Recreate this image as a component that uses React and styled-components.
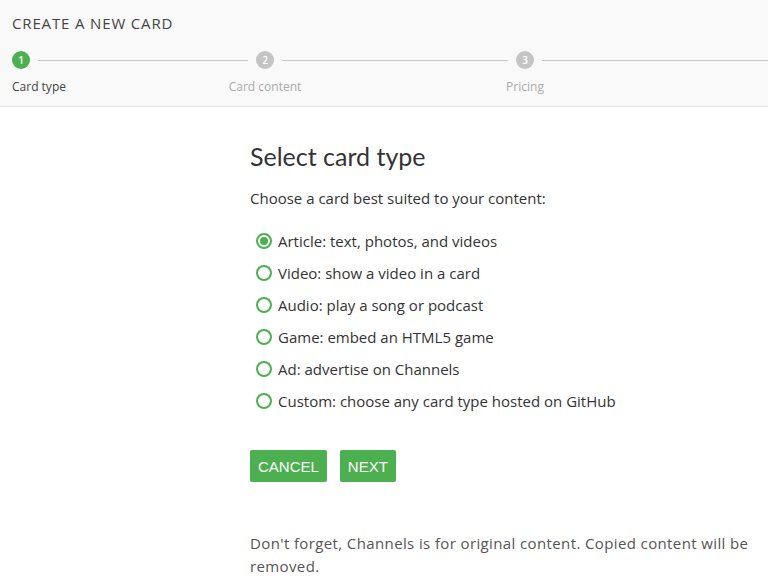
import React, { useState } from "react";
import styled, { createGlobalStyle } from "styled-components";

const Global = createGlobalStyle`
  html, body { margin: 0; padding: 0; background: #fff; }
  body { font-family: "Open Sans", "Liberation Sans", sans-serif; color: #333; }
  * { box-sizing: border-box; }
`;

const Header = styled.header`
  background: #f9f9f9;
  border-bottom: 1px solid #e6e6e6;
  height: 107px;
  padding: 13px 0 0 12px;
`;

const Title = styled.h1`
  margin: 0;
  font-family: "Open Sans", sans-serif;
  font-weight: 400;
  font-size: 15px;
  letter-spacing: 0.85px;
  line-height: 20px;
  color: #444;
`;

const StepTrack = styled.div`
  display: grid;
  grid-template-columns: 18px 210px 18px 226px 18px 1fr;
  align-items: center;
  column-gap: 8px;
  margin-top: 18px;
`;

const Circle = styled.div`
  width: 18px;
  height: 18px;
  border-radius: 50%;
  background: ${(p) => (p.$active ? "#4caf50" : "#c4c4c4")};
  color: #fff;
  font-size: 10px;
  font-weight: 600;
  display: flex;
  align-items: center;
  justify-content: center;
`;

const Line = styled.div`
  height: 1px;
  background: #c8c8c8;
`;

const LabelRow = styled.div`
  height: 20px;
  margin-top: 9px;
  display: grid;
  grid-template-columns: 244px 260px 1fr;
`;

const StepLabel = styled.span`
  font-size: 12px;
  line-height: 18px;
  color: ${(p) => (p.$active ? "#444" : "#aaa")};
  ${(p) =>
    p.$center
      ? `justify-self: start; transform: translateX(calc(9px - 50%));`
      : ""}
`;

const Main = styled.main`
  padding: 34px 8px 0 250px;
`;

const Heading = styled.h2`
  margin: 0;
  font-family: "Lato", "Open Sans", sans-serif;
  font-weight: 400;
  font-size: 25px;
  line-height: 30px;
  color: #333;
`;

const Intro = styled.p`
  margin: 16px 0 0;
  font-size: 15px;
  line-height: 22px;
  color: #333;
`;

const RadioList = styled.div`
  display: flex;
  flex-direction: column;
  margin-top: 16px;
  padding-left: 6px;
`;

const RadioRow = styled.label`
  display: flex;
  align-items: center;
  gap: 6px;
  height: 32px;
  font-size: 15px;
  color: #333;
  cursor: pointer;
`;

const RadioDot = styled.span`
  width: 16px;
  height: 16px;
  border-radius: 50%;
  border: 2px solid #4caf50;
  display: flex;
  align-items: center;
  justify-content: center;
  &::after {
    content: "";
    width: 8px;
    height: 8px;
    border-radius: 50%;
    background: ${(p) => (p.$checked ? "#4caf50" : "transparent")};
  }
`;

const Buttons = styled.div`
  display: flex;
  gap: 13px;
  margin-top: 33px;
`;

const Button = styled.button`
  height: 32px;
  padding: 0 8px;
  border: none;
  border-radius: 2px;
  background: #4caf50;
  color: #fff;
  font-family: "Liberation Sans", Arial, sans-serif;
  font-size: 15px;
  cursor: pointer;
`;

const Note = styled.p`
  margin: 50px 0 0;
  font-size: 15px;
  line-height: 23px;
  color: #555;
  letter-spacing: 0.38px;
`;

const options = [
  "Article: text, photos, and videos",
  "Video: show a video in a card",
  "Audio: play a song or podcast",
  "Game: embed an HTML5 game",
  "Ad: advertise on Channels",
  "Custom: choose any card type hosted on GitHub",
];

export default function App() {
  const [sel, setSel] = useState(0);
  return (
    <>
      <Global />
      <Header>
        <Title>CREATE A NEW CARD</Title>
        <StepTrack>
          <Circle $active>1</Circle>
          <Line />
          <Circle>2</Circle>
          <Line />
          <Circle>3</Circle>
          <Line />
        </StepTrack>
        <LabelRow>
          <StepLabel $active>Card type</StepLabel>
          <StepLabel $center>Card content</StepLabel>
          <StepLabel $center>Pricing</StepLabel>
        </LabelRow>
      </Header>
      <Main>
        <Heading>Select card type</Heading>
        <Intro>Choose a card best suited to your content:</Intro>
        <RadioList>
          {options.map((o, i) => (
            <RadioRow key={o} onClick={() => setSel(i)}>
              <RadioDot $checked={sel === i} />
              {o}
            </RadioRow>
          ))}
        </RadioList>
        <Buttons>
          <Button>CANCEL</Button>
          <Button>NEXT</Button>
        </Buttons>
        <Note>
          Don't forget, Channels is for original content. Copied content will
          be removed.
        </Note>
      </Main>
    </>
  );
}
